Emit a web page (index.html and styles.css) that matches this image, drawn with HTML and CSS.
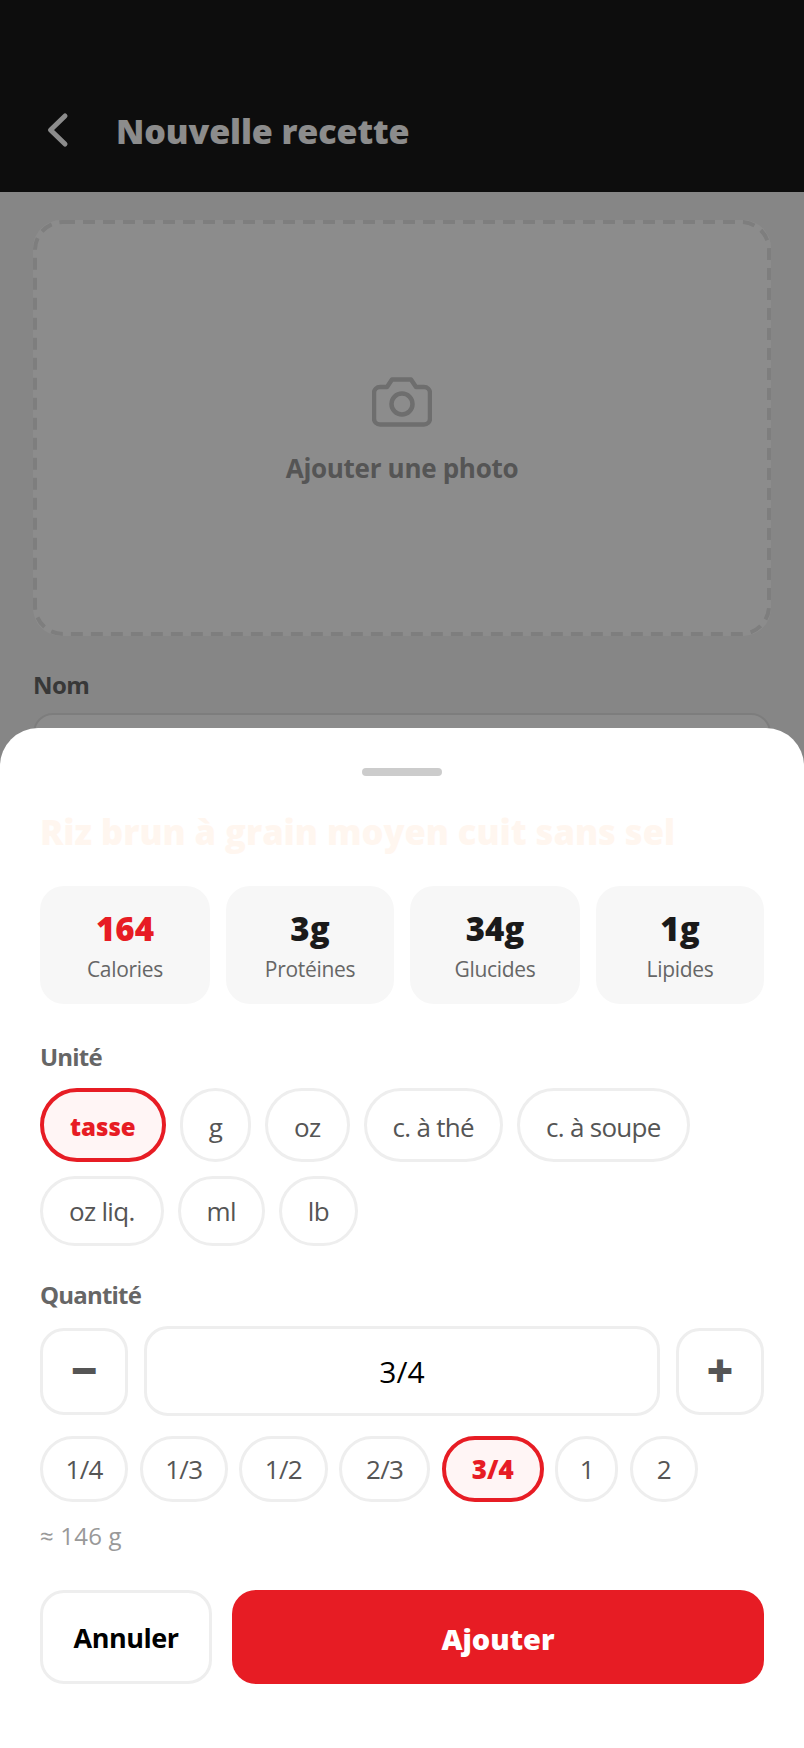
FILE: index.html
```html
<!DOCTYPE html>
<html lang="fr">
<head>
    <meta charset="UTF-8">
    <meta name="viewport" content="width=device-width, initial-scale=1.0">
    <title>Nouvelle recette</title>
    <link rel="stylesheet" href="styles.css">
</head>
<body>
    <header class="topbar">
        <svg class="back-icon" width="24" height="36" viewBox="0 0 24 36" fill="none" stroke="#fff" stroke-width="5" stroke-linecap="round" stroke-linejoin="round">
            <path d="M19 4 L4.5 18 L19 32"/>
        </svg>
        <h1>Nouvelle recette</h1>
    </header>

    <main class="page">
        <div class="photo-box">
            <svg class="photo-dash" width="738" height="416" fill="none">
                <rect x="2" y="2" width="734" height="412" rx="28" stroke="#e5e5e5" stroke-width="4" stroke-dasharray="12 8"/>
            </svg>
            <svg class="camera-icon" width="60" height="50" viewBox="0 0 60 50" fill="none" stroke="#c8c8c8" stroke-width="4.5" stroke-linecap="round" stroke-linejoin="round">
                <path d="M20 2.5 h19 l5 7.5 h8 a6 6 0 0 1 6 6 v25.5 a6 6 0 0 1 -6 6 h-44 a6 6 0 0 1 -6 -6 v-25.5 a6 6 0 0 1 6 -6 h7 z"/>
                <circle cx="30" cy="27" r="10.5"/>
            </svg>
            <span>Ajouter une photo</span>
        </div>
        <label class="field-label">Nom</label>
        <div class="field-input"></div>
    </main>

    <div class="overlay"></div>

    <section class="sheet">
        <div class="handle"></div>
        <h2 class="food-name">Riz brun à grain moyen cuit sans sel</h2>

        <div class="stats">
            <div class="stat stat-cal"><b>164</b><span>Calories</span></div>
            <div class="stat stat-pro"><b>3g</b><span>Protéines</span></div>
            <div class="stat stat-cal"><b>34g</b><span>Glucides</span></div>
            <div class="stat stat-pro"><b>1g</b><span>Lipides</span></div>
        </div>

        <div class="section-label">Unité</div>
        <div class="chip-row chip-row-tall">
            <button class="chip active">tasse</button>
            <button class="chip">g</button>
            <button class="chip">oz</button>
            <button class="chip">c. à thé</button>
            <button class="chip">c. à soupe</button>
        </div>
        <div class="chip-row chip-row-low">
            <button class="chip">oz liq.</button>
            <button class="chip">ml</button>
            <button class="chip">lb</button>
        </div>

        <div class="section-label qty-label">Quantité</div>
        <div class="stepper">
            <button class="step-btn">−</button>
            <div class="qty-value">3/4</div>
            <button class="step-btn">+</button>
        </div>
        <div class="chip-row fractions">
            <button class="chip">1/4</button>
            <button class="chip">1/3</button>
            <button class="chip">1/2</button>
            <button class="chip chip-wide">2/3</button>
            <button class="chip active">3/4</button>
            <button class="chip chip-small">1</button>
            <button class="chip chip-two">2</button>
        </div>
        <div class="approx">≈ 146 g</div>

        <div class="actions">
            <button class="btn-cancel">Annuler</button>
            <button class="btn-add">Ajouter</button>
        </div>
    </section>
</body>
</html>
```

FILE: styles.css
```css
* {
    box-sizing: border-box;
}
html, body {
    margin: 0;
    height: 1748px;
    overflow: hidden;
}
body {
    position: relative;
    font-family: "Open Sans", "Noto Sans", sans-serif;
    background: #f4f4f4;
}
button {
    font-family: inherit;
    background: #fff;
    cursor: pointer;
}

/* page behind the sheet */
.topbar {
    height: 192px;
    background: #181818;
    display: flex;
    align-items: center;
    padding: 70px 0 0 46px;
}
.back-icon {
    margin: -2px 46px 0 0;
}
.topbar h1 {
    margin: 0;
    font-size: 34px;
    font-weight: 800;
    letter-spacing: -0.1px;
    color: #fff;
}
.page {
    padding: 28px 33px 0;
}
.photo-box {
    position: relative;
    height: 416px;
    padding-top: 7px;
    background: #fff;
    border-radius: 28px;
    display: flex;
    flex-direction: column;
    align-items: center;
    justify-content: center;
    gap: 23px;
}
.photo-dash {
    position: absolute;
    top: 0;
    left: 0;
}
.photo-box span {
    font-size: 26px;
    font-weight: 700;
    letter-spacing: -0.3px;
    color: #9b9b9b;
}
.field-label {
    display: block;
    margin: 32px 0 12px;
    font-size: 24px;
    font-weight: 700;
    letter-spacing: -0.6px;
    color: #666;
}
.field-input {
    height: 64px;
    background: #fff;
    border: 2px solid #e4e4e4;
    border-radius: 20px;
}
.overlay {
    position: absolute;
    inset: 0;
    background: rgba(0, 0, 0, 0.45);
}

/* bottom sheet */
.sheet {
    position: absolute;
    left: 0;
    right: 0;
    bottom: 0;
    height: 1020px;
    background: #fff;
    border-radius: 38px 38px 0 0;
    padding: 40px 40px 0;
}
.handle {
    width: 80px;
    height: 8px;
    margin: 0 auto;
    background: #ccc;
    border-radius: 4px;
}
.food-name {
    margin: 31px 0 29px;
    height: 50px;
    line-height: 50px;
    font-size: 34.5px;
    font-weight: 800;
    color: #fff6ef;
    white-space: nowrap;
}
.stats {
    display: flex;
    gap: 16px;
}
.stat {
    height: 118px;
    padding-top: 2px;
    background: #f7f7f7;
    border-radius: 24px;
    display: flex;
    flex-direction: column;
    align-items: center;
    justify-content: center;
    gap: 6px;
}
.stat-cal {
    width: 170px;
}
.stat-pro {
    width: 168px;
}
.stat b {
    font-size: 33px;
    line-height: 40px;
    font-weight: 800;
    color: #1a1a1a;
}
.stat:first-child b {
    color: #e71c24;
}
.stat span {
    font-size: 21px;
    line-height: 28px;
    letter-spacing: -0.3px;
    color: #666;
}
.section-label {
    margin: 36px 0 14px;
    font-size: 24px;
    line-height: 34px;
    font-weight: 700;
    letter-spacing: -0.8px;
    color: #666;
}
.chip-row {
    display: flex;
    gap: 14px;
}
.chip {
    height: 100%;
    padding: 0 26px;
    border: 3px solid #eee;
    border-radius: 37px;
    font-size: 26px;
    font-weight: 500;
    letter-spacing: -0.7px;
    color: #555;
}
.chip.active {
    background: #fff5f5;
    border: 4px solid #e71c24;
    font-weight: 800;
    letter-spacing: 0;
    color: #e71c24;
}
.chip-row-tall {
    height: 74px;
}
.chip-row-tall .chip {
    padding-top: 3px;
}
.chip-row-tall .chip.active {
    padding: 3px 26px 0;
    font-size: 24px;
}
.chip-row-low {
    height: 70px;
    margin-top: 14px;
}
.qty-label {
    margin-top: 32px;
}
.stepper {
    display: flex;
    align-items: center;
    gap: 16px;
}
.step-btn {
    width: 88px;
    height: 87px;
    padding: 0 0 4px;
    border: 3px solid #eee;
    border-radius: 24px;
    font-size: 46px;
    line-height: 1;
    font-weight: 800;
    color: #555;
}
.qty-value {
    flex: 1;
    height: 90px;
    border: 3px solid #eee;
    border-radius: 24px;
    display: flex;
    align-items: center;
    justify-content: center;
    font-size: 30px;
    color: #000;
}
.fractions {
    height: 66px;
    margin-top: 20px;
    gap: 11.5px;
}
.fractions .chip {
    padding: 0 22.5px;
}
.fractions .chip-wide {
    padding: 0 24px;
}
.fractions .chip.active {
    padding: 0 26px;
}
.fractions .chip-small {
    padding: 0 21.5px;
}
.fractions .chip-two {
    padding: 0 24px;
}
.approx {
    margin-top: 18px;
    font-size: 24px;
    line-height: 32px;
    letter-spacing: 0.2px;
    color: #999;
}
.actions {
    display: flex;
    gap: 20px;
    margin-top: 38px;
    height: 94px;
}
.btn-cancel {
    width: 172px;
    border: 3px solid #eee;
    border-radius: 24px;
    font-size: 27px;
    font-weight: 700;
    letter-spacing: -0.5px;
    color: #000;
}
.btn-add {
    flex: 1;
    padding-top: 3px;
    border: none;
    border-radius: 24px;
    background: #e71c24;
    font-size: 29px;
    font-weight: 800;
    color: #fff;
}
```
